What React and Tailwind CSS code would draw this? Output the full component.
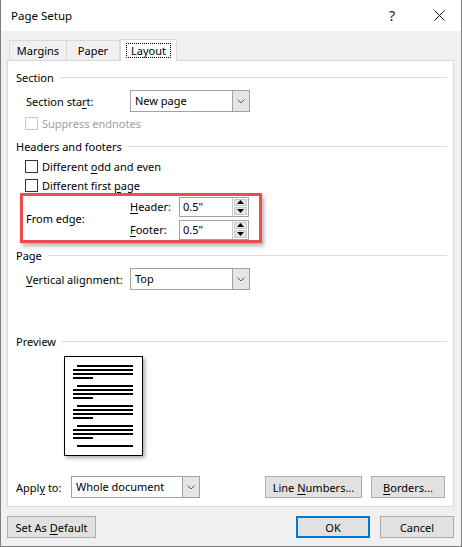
import React from "react";

const Key = ({ children }) => (
  <span className="underline underline-offset-[2px] decoration-1">{children}</span>
);

const Chevron = () => (
  <svg width="8" height="5" viewBox="0 0 8 5">
    <polyline points="0.5,0.5 4,4 7.5,0.5" fill="none" stroke="#5a5a5a" strokeWidth="1" />
  </svg>
);

const GroupHeader = ({ title }) => (
  <div className="flex items-center h-[16px] pl-[8px] pr-[6px]">
    <span>{title}</span>
    <div className="ml-[6px] flex-1 h-px bg-[#dcdcdc]" />
  </div>
);

const Select = ({ value, width }) => (
  <div className={`flex h-[22px] border border-[#a2a2a2] bg-white ${width}`}>
    <span className="flex-1 pl-[4px] leading-[20px]">{value}</span>
    <div className="w-[17px] border-l border-[#a2a2a2] bg-[#e5e5e5] flex items-center justify-center">
      <Chevron />
    </div>
  </div>
);

const Checkbox = ({ disabled }) => (
  <div
    className={`w-[13px] h-[13px] border bg-white ${
      disabled ? "border-[#c8c8c8]" : "border-[#333333]"
    }`}
  />
);

const Spin = ({ value }) => (
  <div className="flex h-[20px] w-[70px] border border-[#a2a2a2] bg-white">
    <span className="flex-1 pl-[3px] leading-[18px]">{value}</span>
    <div className="w-[16px] flex flex-col gap-px p-px border-l border-[#c8c8c8]">
      <div className="flex-1 bg-[#e5e5e5] border border-[#c8c8c8] flex items-center justify-center">
        <svg width="7" height="4" viewBox="0 0 7 4">
          <polygon points="0,4 3.5,0 7,4" fill="#000" />
        </svg>
      </div>
      <div className="flex-1 bg-[#e5e5e5] border border-[#c8c8c8] flex items-center justify-center">
        <svg width="7" height="4" viewBox="0 0 7 4">
          <polygon points="0,0 3.5,4 7,0" fill="#000" />
        </svg>
      </div>
    </div>
  </div>
);

const Button = ({ children, className = "" }) => (
  <div
    className={`h-[22px] flex items-center justify-center bg-[#e1e1e1] border border-[#adadad] ${className}`}
  >
    {children}
  </div>
);

const LineGroup = ({ last }) =>
  last ? (
    <div className="ml-[4px] w-[56px] h-[2px] bg-black" />
  ) : (
    <div className="flex flex-col gap-[2px] mb-[6px]">
      <div className="ml-[4px] w-[56px] h-[2px] bg-black" />
      <div className="w-[60px] h-[2px] bg-black" />
      <div className="w-[60px] h-[2px] bg-black" />
      <div className="w-[20px] h-[2px] bg-black" />
    </div>
  );

export default function App() {
  return (
    <div className="w-[462px] h-[547px] flex flex-col border-x border-b border-[#7f7f7f] bg-[#f0f0f0] text-[11px] text-black font-['Noto_Sans',sans-serif] leading-none whitespace-nowrap overflow-hidden">
      {/* title bar */}
      <div className="h-[31px] bg-white flex items-center shrink-0">
        <span className="ml-[10px] text-[11.5px]">Page Setup</span>
        <span className="ml-auto text-[14px] text-[#222]">?</span>
        <svg className="ml-[39px] mr-[16px]" width="11" height="11" viewBox="0 0 11 11">
          <path d="M0.5 0.5 L10.5 10.5 M10.5 0.5 L0.5 10.5" stroke="#111" strokeWidth="1" />
        </svg>
      </div>

      {/* tabs */}
      <div className="flex items-end h-[22px] mt-[7px] ml-[8px] shrink-0">
        <div className="w-[58px] h-[20px] border border-b-0 border-[#d9d9d9] flex items-center justify-center">
          Margins
        </div>
        <div className="w-[53px] h-[20px] border border-l-0 border-b-0 border-[#d9d9d9] flex items-center justify-center">
          Paper
        </div>
        <div className="relative z-10 -mb-px w-[57px] h-[22px] bg-white border border-b-0 border-[#d9d9d9] flex items-center justify-center">
          <span className="border border-dotted border-black px-[4px] py-[1px]">Layout</span>
        </div>
      </div>

      {/* panel */}
      <div className="ml-[6px] w-[447px] h-[447px] bg-white border border-[#d9d9d9] flex flex-col shrink-0">
        <div className="mt-[8px]">
          <GroupHeader title="Section" />
        </div>
        <div className="mt-[5px] flex items-center h-[22px]">
          <span className="ml-[18px] w-[104px]">
            Section sta<Key>r</Key>t:
          </span>
          <Select value="New page" width="w-[120px]" />
        </div>
        <div className="mt-[4px] flex items-center h-[14px] ml-[17px] gap-[4px] text-[#a0a0a0]">
          <Checkbox disabled />
          <span>Suppress endnotes</span>
        </div>

        <div className="mt-[8px]">
          <GroupHeader title="Headers and footers" />
        </div>
        <div className="mt-[5px] flex items-center h-[14px] ml-[17px] gap-[4px]">
          <Checkbox />
          <span>
            Different <Key>o</Key>dd and even
          </span>
        </div>
        <div className="mt-[5px] flex items-center h-[14px] ml-[17px] gap-[4px]">
          <Checkbox />
          <span>
            Different first <Key>p</Key>age
          </span>
        </div>

        <div className="mt-[1px] ml-[12px] w-[242px] h-[50px] border-[3px] border-[#ef4b4f] shadow-[2px_3px_4px_rgba(0,0,0,0.3)] flex items-center">
          <span className="w-[107px] pl-[3px]">From edge:</span>
          <div className="flex flex-col gap-[3px]">
            <div className="flex items-center">
              <span className="w-[49px]">
                <Key>H</Key>eader:
              </span>
              <Spin value={'0.5"'} />
            </div>
            <div className="flex items-center">
              <span className="w-[49px]">
                <Key>F</Key>ooter:
              </span>
              <Spin value={'0.5"'} />
            </div>
          </div>
        </div>

        <div className="mt-[4px]">
          <GroupHeader title="Page" />
        </div>
        <div className="mt-[5px] flex items-center h-[22px]">
          <span className="ml-[18px] w-[104px]">
            <Key>V</Key>ertical alignment:
          </span>
          <Select value="Top" width="w-[120px]" />
        </div>

        <div className="mt-[43px]">
          <GroupHeader title="Preview" />
        </div>
        <div className="mt-[7px] ml-[56px] w-[79px] h-[100px] border border-black bg-white shadow-[2px_2px_4px_rgba(0,0,0,0.35)] flex flex-col pt-[8px] pl-[8px]">
          <LineGroup />
          <LineGroup />
          <LineGroup />
          <LineGroup />
          <LineGroup last />
        </div>

        <div className="mt-[20px] flex items-center h-[22px] pl-[8px]">
          <span className="w-[55px]">
            Appl<Key>y</Key> to:
          </span>
          <Select value="Whole document" width="w-[129px]" />
          <Button className="ml-[65px] w-[97px]">
            <span>
              Line <Key>N</Key>umbers...
            </span>
          </Button>
          <Button className="ml-[9px] w-[74px]">
            <span>
              <Key>B</Key>orders...
            </span>
          </Button>
        </div>
      </div>

      {/* bottom buttons */}
      <div className="mt-[9px] flex items-center ml-[6px] mr-[7px]">
        <Button className="w-[89px]">
          <span>
            Set As <Key>D</Key>efault
          </span>
        </Button>
        <div className="flex-1" />
        <div className="w-[74px] h-[22px] flex items-center justify-center bg-[#e1e1e1] border-2 border-[#0078d7]">
          OK
        </div>
        <Button className="ml-[10px] w-[74px]">Cancel</Button>
      </div>
    </div>
  );
}
